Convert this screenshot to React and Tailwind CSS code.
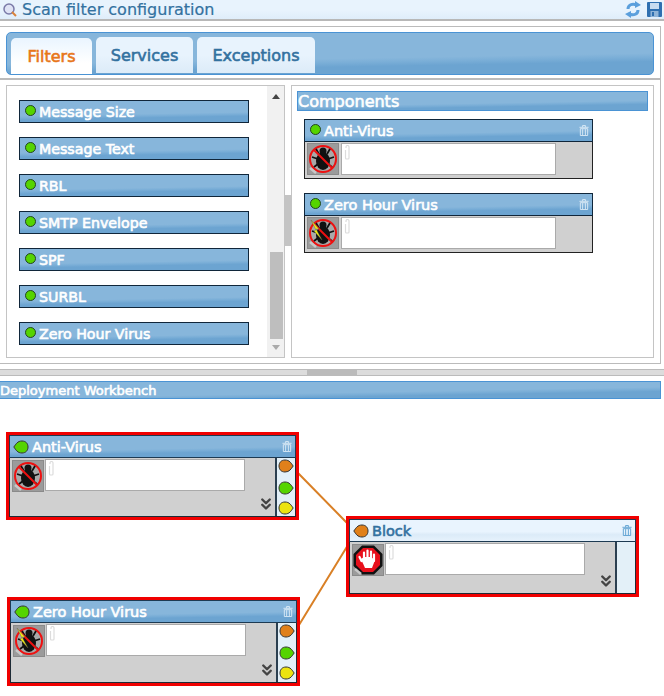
import React from "react";
import { ChevronsDown } from "lucide-react";

const filters = ["Message Size", "Message Text", "RBL", "SMTP Envelope", "SPF", "SURBL", "Zero Hour Virus"];
const gloss = "bg-[linear-gradient(179deg,#87b6db_60%,#7aaed7_68%,#6ca4d1_76%)]";
const lightGloss = "bg-[linear-gradient(180deg,#e9f4fe_55%,#dcebf8_70%,#e6f2fc_100%)]";
const heavy = "[-webkit-text-stroke:0.6px_currentColor]";

function Dot({ color = "#55d400", teardrop }) {
  if (teardrop === "left") {
    return (
      <svg width="16" height="14" viewBox="0 0 16 14" className="shrink-0">
        <path d="M0.8 7 C3 4 4.5 1 9 1 C13 1 15 3.8 15 7 C15 10.2 13 13 9 13 C4.5 13 3 10 0.8 7Z" fill={color} stroke="#333" />
      </svg>
    );
  }
  if (teardrop === "right") {
    return (
      <svg width="16" height="14" viewBox="0 0 16 14" className="shrink-0">
        <path d="M15.2 7 C13 4 11.5 1 7 1 C3 1 1 3.8 1 7 C1 10.2 3 13 7 13 C11.5 13 13 10 15.2 7Z" fill={color} stroke="#333" />
      </svg>
    );
  }
  return <span className="size-[11px] rounded-full border border-[#224422] shrink-0 -mt-[2px]" style={{ background: color }} />;
}

function Clip() {
  return (
    <svg width="7" height="15" viewBox="0 0 7 15" className="ml-[2px] mt-[1px]">
      <path d="M2 3 V2 a1.5 1.5 0 0 1 3 0 V13 a1 1 0 0 1 -1 1 H2.5 a1 1 0 0 1 -1 -1 V5" fill="none" stroke="#dcdcdc" strokeWidth="1.2" />
    </svg>
  );
}

function Tile({ kind }) {
  return (
    <svg width="32" height="32" viewBox="0 0 32 32" className="shrink-0">
      <rect x="0.5" y="0.5" width="31" height="31" fill="#9b9b9b" stroke="#8a8a8a" />
      {kind === "block" ? (
        <g>
          <polygon points="10,1.5 22,1.5 30.5,10 30.5,22 22,30.5 10,30.5 1.5,22 1.5,10" fill="#111" />
          <polygon points="11,4 21,4 28,11 28,21 21,28 11,28 4,21 4,11" fill="#e8101c" />
          <path d="M9.5 17 L7.5 13 M12 15 V8.5 M15.5 15 V6.5 M19 15 V7.5 M22 17 V10.5" stroke="#fff" strokeWidth="2.2" strokeLinecap="round" />
          <path d="M9 15 L13 24 H20 L23 16 L19 13 H12Z" fill="#fff" />
        </g>
      ) : (
        <g>
          <circle cx="16" cy="16" r="13" fill="#a9a9a9" stroke="#ee1111" strokeWidth="2" />
          <ellipse cx="16" cy="18" rx="7" ry="9" fill="#111" />
          <circle cx="16" cy="8" r="3.5" fill="#111" />
          <path d="M9 6 L12 11 M23 6 L20 11 M5 14 L11 16 M27 14 L21 16 M7 24 L11 21 M25 24 L21 21" stroke="#111" strokeWidth="1.8" />
          <line x1="7" y1="7" x2="25" y2="25" stroke="#ee1111" strokeWidth="2" />
          {kind === "zero" && <polygon points="4,3 12,12 9,12 15,23 7,14 9,13" fill="#f4ee10" stroke="#555" strokeWidth="0.4" />}
        </g>
      )}
      <path d="M3 25 L9 30" stroke="#c8c8c8" strokeWidth="2.5" />
    </svg>
  );
}

function Trash({ color }) {
  return (
    <svg width="10" height="11" viewBox="0 0 10 12" className="shrink-0" fill="none" stroke={color}>
      <path d="M0 2.5 H10 M3.5 2.5 V0.5 H6.5 V2.5" />
      <path d="M1 4 H9 V11.5 H1Z" strokeWidth="1" />
      <path d="M3.5 4.5 V11 M6.5 4.5 V11" />
    </svg>
  );
}

function PaletteNode({ title, kind }) {
  return (
    <div className="w-[289px]">
      <div className={`h-[23px] ${gloss} border border-[#10263a] flex items-center pl-[5px] pr-[3px] gap-[3px]`}>
        <Dot />
        <span className={`text-white text-[14.5px] leading-none flex-1 mt-[2px] ${heavy}`}>{title}</span>
        <Trash color="#dcebf6" />
      </div>
      <div className="h-[37px] bg-[#d0d0d0] border-x border-b border-[#222] flex pl-[2px] pt-[1px] gap-[2px]">
        <Tile kind={kind} />
        <div className="w-[215px] h-[32px] bg-white border border-[#aaa]">
          <Clip />
        </div>
      </div>
    </div>
  );
}

function WorkNode({ title, kind, className, light }) {
  return (
    <div className={`absolute w-[293px] border-[3px] border-[#f00000] ${className}`}>
      <div className={`h-[23px] border border-[#1d3a52] flex items-center pl-[3px] pr-[3px] gap-[3px] ${light ? lightGloss : gloss}`}>
        <Dot teardrop="left" color={light ? "#e0801a" : "#55d400"} />
        <span className={`text-[14.5px] leading-none flex-1 mt-[2px] ${heavy} ${light ? "text-[#33719f]" : "text-white"}`}>{title}</span>
        <Trash color={light ? "#5a9fd0" : "#dcebf6"} />
      </div>
      <div className="flex h-[calc(100%-23px)] border-x border-b border-[#1d2a35]">
        <div className="relative flex-1 bg-[#d0d0d0] flex pl-[2px] pt-[2px] gap-[1px] items-start">
          <Tile kind={kind} />
          <div className="w-[200px] h-[32px] bg-white border border-[#aaa] -mt-[1px]">
            <Clip />
          </div>
          <ChevronsDown size={18} strokeWidth={3.2} className="absolute right-[0px] bottom-[3px] text-[#444]" />
        </div>
        <div className="w-[20px] bg-[#e3f0f8] border-l-2 border-[#2b3f50] flex flex-col items-center pt-[1px]">
          {!light && (
            <>
              <Dot teardrop="right" color="#e0801a" />
              <span className="h-[8px]" />
              <Dot teardrop="right" color="#55d400" />
              <span className="h-[6px]" />
              <Dot teardrop="right" color="#ece410" />
            </>
          )}
        </div>
      </div>
    </div>
  );
}

export default function App() {
  return (
    <div className="w-[664px] h-[696px] bg-white overflow-hidden font-['DejaVu_Sans',sans-serif]">
      {/* title */}
      <div className="h-[21px] bg-[linear-gradient(180deg,#e8f3fd_55%,#dfedfa_100%)] border-b-2 border-[#b8b8b8] flex items-center pl-[2px] pr-[2px]">
        <svg width="16" height="17" viewBox="0 0 16 17" className="shrink-0">
          <circle cx="7" cy="8" r="5" fill="#dfe3f5" stroke="#7a7aa8" strokeWidth="1.5" />
          <path d="M10 11 L14 15" stroke="#d9823a" strokeWidth="2" />
        </svg>
        <span className="ml-[4px] mt-[1px] text-[16px] leading-none text-[#33719f] flex-1 [-webkit-text-stroke:0.2px_currentColor]">Scan filter configuration</span>
        <svg width="16" height="17" viewBox="0 0 16 17" className="mr-[6px]" fill="none" stroke="#5b9fdc" strokeWidth="3">
          <path d="M3 8 C3 4 7 2 12 4" />
          <path d="M13 9 C13 13 9 15 4 13" />
          <path d="M10 0 L16 4 L10 7Z M6 10 L0 13 L6 17Z" fill="#5b9fdc" stroke="none" />
        </svg>
        <svg width="15" height="15" viewBox="0 0 15 15">
          <rect width="15" height="15" rx="1" fill="#2f6fb0" />
          <rect x="3" y="1" width="9" height="6" fill="#c8dcf0" />
          <rect x="3.5" y="9" width="8" height="6" fill="#8fb4d8" />
          <rect x="5" y="10" width="2" height="4" fill="#2f6fb0" />
        </svg>
      </div>

      {/* config panel */}
      <div className="mt-[5px] w-[661px] h-[338px] border border-[#bbb] border-l-0 flex flex-col">
        <div className="h-[53px] px-[6px] pt-[5px] border-b-2 border-[#bbb]">
          <div className={`h-[43px] ${gloss} border border-[#4a93d4] rounded-[5px] flex items-end pl-[4px] gap-[4px]`}>
            <div className={`w-[81px] h-[36px] pt-[1px] bg-[linear-gradient(180deg,#eaf5ff_0%,#ffffff_70%)] rounded-t-[5px] flex items-center justify-center text-[16px] text-[#e8761a] ${heavy}`}>Filters</div>
            <div className={`w-[97px] h-[36px] pt-[1px] mb-[1px] bg-[linear-gradient(180deg,#e8f3fd_50%,#dcebf8_100%)] rounded-t-[5px] flex items-center justify-center text-[16px] text-[#33719f] ${heavy}`}>Services</div>
            <div className={`w-[118px] h-[36px] pt-[1px] mb-[1px] bg-[linear-gradient(180deg,#e8f3fd_50%,#dcebf8_100%)] rounded-t-[5px] flex items-center justify-center text-[16px] text-[#33719f] ${heavy}`}>Exceptions</div>
          </div>
        </div>
        <div className="flex-1 flex px-[6px] pt-[5px] pb-[5px]">
          {/* filter list */}
          <div className="w-[279px] border border-[#c4c4c4] flex relative">
            <div className="flex-1 pl-[12px] pt-[14px] flex flex-col gap-[14px]">
              {filters.map((f) => (
                <div key={f} className={`w-[230px] h-[23px] ${gloss} border border-[#10263a] flex items-center pl-[5px] gap-[3px]`}>
                  <Dot />
                  <span className={`text-white text-[14.2px] leading-none mt-[1px] ${heavy}`}>{f}</span>
                </div>
              ))}
            </div>
            <div className="w-[17px] bg-[#f1f1f1] flex flex-col items-center pl-[1px]">
              <span className="mt-[8px] w-0 h-0 border-x-[4px] border-x-transparent border-b-[5px] border-b-[#444]" />
              <div className="w-[13px] h-[87px] mt-[153px] bg-[#bebebe]" />
              <span className="mt-[6px] w-0 h-0 border-x-[4px] border-x-transparent border-t-[5px] border-t-[#aaa]" />
            </div>
          </div>
          {/* splitter */}
          <div className="w-[6px] flex items-start">
            <div className="w-[6px] h-[51px] mt-[110px] bg-[#c4c4c4]" />
          </div>
          {/* components */}
          <div className="flex-1 border border-[#c4c4c4] pt-[5px] px-[5px]">
            <div className={`h-[20px] pt-[2px] ${gloss} border border-[#4a93d4] flex items-center text-white text-[16px] leading-none ${heavy}`}>Components</div>
            <div className="mt-[8px] ml-[7px] flex flex-col gap-[14px]">
              <PaletteNode title="Anti-Virus" kind="virus" />
              <PaletteNode title="Zero Hour Virus" kind="zero" />
            </div>
          </div>
        </div>
      </div>

      {/* horizontal splitter */}
      <div className="mt-[5px] h-[7px] border-y border-[#bbb] bg-[#dcdcdc] flex justify-center">
        <div className="w-[50px] bg-[#bbb]" />
      </div>

      {/* workbench */}
      <div className={`mt-[5px] w-[661px] h-[18px] ${gloss} border border-[#4a93d4] border-l-0 text-white text-[13px] leading-none flex items-center ${heavy}`}>Deployment Workbench</div>

      <div className="relative h-[297px]">
        <svg width="664" height="297" className="absolute left-0 top-0">
          <path d="M298 74 L348 125 M299 226 L348 146" stroke="#d98026" strokeWidth="2" fill="none" />
        </svg>
        <WorkNode title="Anti-Virus" kind="virus" className="left-[6px] top-[33px] h-[88px]" />
        <WorkNode title="Block" kind="block" light className="left-[346px] top-[117px] h-[81px]" />
        <WorkNode title="Zero Hour Virus" kind="zero" className="left-[7px] top-[198px] h-[89px]" />
      </div>
    </div>
  );
}
